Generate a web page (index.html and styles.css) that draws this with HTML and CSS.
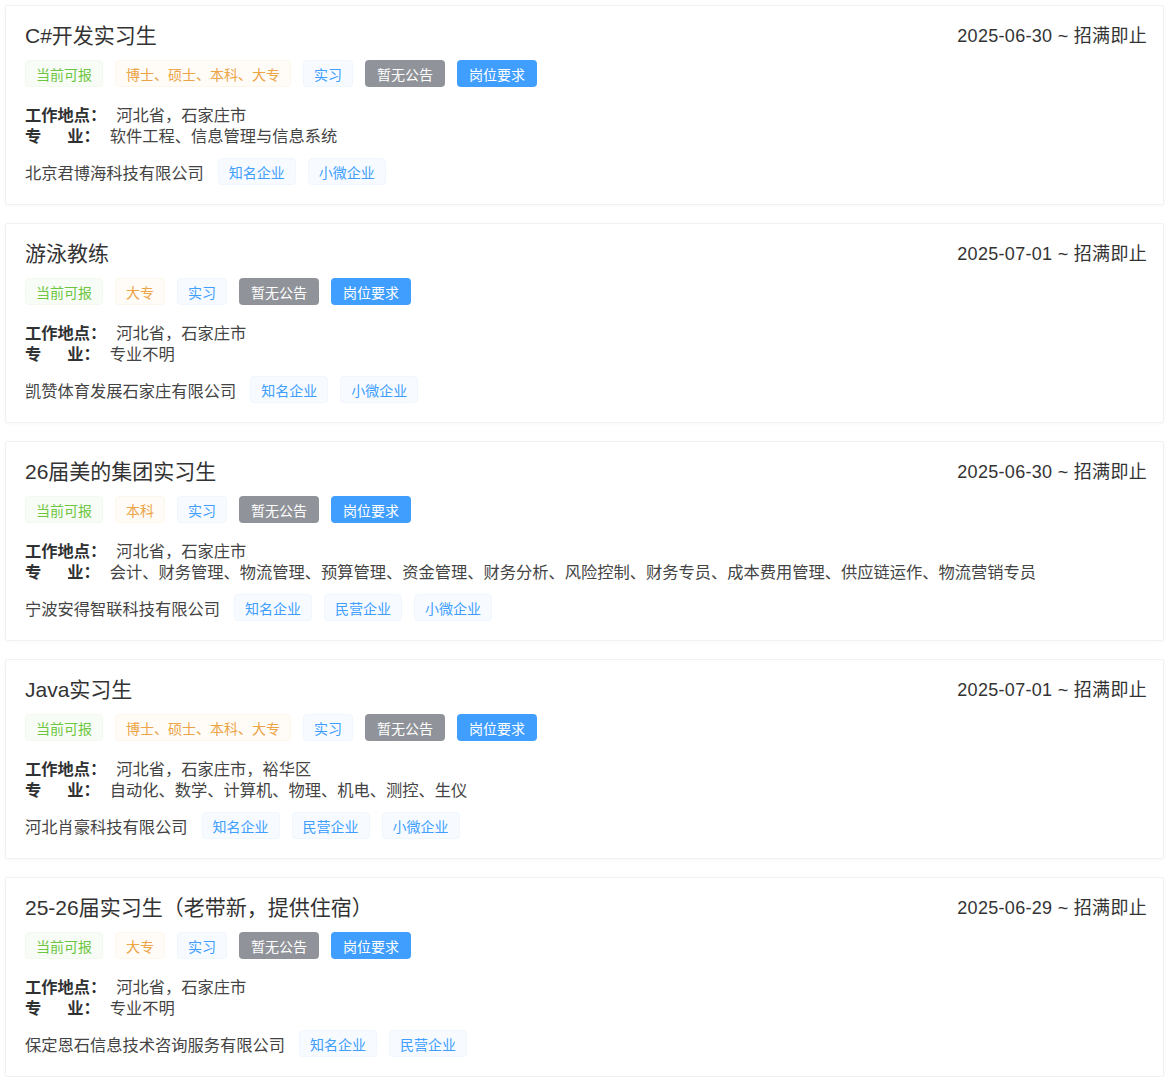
FILE: index.html
```html
<!DOCTYPE html>
<html lang="zh-CN">
<head>
  <meta charset="UTF-8">
  <meta name="viewport" content="width=device-width, initial-scale=1.0">
  <title>实习岗位列表</title>
  <link rel="stylesheet" href="styles.css">
</head>
<body>
  <div class="job-list">

    <div class="job-card">
      <div class="job-head">
        <span class="job-title">C#开发实习生</span>
        <span class="job-date">2025-06-30 ~ 招满即止</span>
      </div>
      <div class="tag-row">
        <span class="tag tag-success">当前可报</span>
        <span class="tag tag-warning">博士、硕士、本科、大专</span>
        <span class="tag tag-primary">实习</span>
        <span class="btn btn-info">暂无公告</span>
        <span class="btn btn-primary">岗位要求</span>
      </div>
      <div class="job-info">
        <p><b class="label">工作地点：</b>河北省，石家庄市</p>
        <p><b class="label">专<i class="sp"></i>业：</b>软件工程、信息管理与信息系统</p>
      </div>
      <div class="company-row">
        <span class="company">北京君博海科技有限公司</span>
        <span class="tag tag-primary">知名企业</span>
        <span class="tag tag-primary">小微企业</span>
      </div>
    </div>

    <div class="job-card">
      <div class="job-head">
        <span class="job-title">游泳教练</span>
        <span class="job-date">2025-07-01 ~ 招满即止</span>
      </div>
      <div class="tag-row">
        <span class="tag tag-success">当前可报</span>
        <span class="tag tag-warning">大专</span>
        <span class="tag tag-primary">实习</span>
        <span class="btn btn-info">暂无公告</span>
        <span class="btn btn-primary">岗位要求</span>
      </div>
      <div class="job-info">
        <p><b class="label">工作地点：</b>河北省，石家庄市</p>
        <p><b class="label">专<i class="sp"></i>业：</b>专业不明</p>
      </div>
      <div class="company-row">
        <span class="company">凯赞体育发展石家庄有限公司</span>
        <span class="tag tag-primary">知名企业</span>
        <span class="tag tag-primary">小微企业</span>
      </div>
    </div>

    <div class="job-card">
      <div class="job-head">
        <span class="job-title">26届美的集团实习生</span>
        <span class="job-date">2025-06-30 ~ 招满即止</span>
      </div>
      <div class="tag-row">
        <span class="tag tag-success">当前可报</span>
        <span class="tag tag-warning">本科</span>
        <span class="tag tag-primary">实习</span>
        <span class="btn btn-info">暂无公告</span>
        <span class="btn btn-primary">岗位要求</span>
      </div>
      <div class="job-info">
        <p><b class="label">工作地点：</b>河北省，石家庄市</p>
        <p><b class="label">专<i class="sp"></i>业：</b>会计、财务管理、物流管理、预算管理、资金管理、财务分析、风险控制、财务专员、成本费用管理、供应链运作、物流营销专员</p>
      </div>
      <div class="company-row">
        <span class="company">宁波安得智联科技有限公司</span>
        <span class="tag tag-primary">知名企业</span>
        <span class="tag tag-primary">民营企业</span>
        <span class="tag tag-primary">小微企业</span>
      </div>
    </div>

    <div class="job-card">
      <div class="job-head">
        <span class="job-title">Java实习生</span>
        <span class="job-date">2025-07-01 ~ 招满即止</span>
      </div>
      <div class="tag-row">
        <span class="tag tag-success">当前可报</span>
        <span class="tag tag-warning">博士、硕士、本科、大专</span>
        <span class="tag tag-primary">实习</span>
        <span class="btn btn-info">暂无公告</span>
        <span class="btn btn-primary">岗位要求</span>
      </div>
      <div class="job-info">
        <p><b class="label">工作地点：</b>河北省，石家庄市，裕华区</p>
        <p><b class="label">专<i class="sp"></i>业：</b>自动化、数学、计算机、物理、机电、测控、生仪</p>
      </div>
      <div class="company-row">
        <span class="company">河北肖豪科技有限公司</span>
        <span class="tag tag-primary">知名企业</span>
        <span class="tag tag-primary">民营企业</span>
        <span class="tag tag-primary">小微企业</span>
      </div>
    </div>

    <div class="job-card">
      <div class="job-head">
        <span class="job-title">25-26届实习生（老带新，提供住宿）</span>
        <span class="job-date">2025-06-29 ~ 招满即止</span>
      </div>
      <div class="tag-row">
        <span class="tag tag-success">当前可报</span>
        <span class="tag tag-warning">大专</span>
        <span class="tag tag-primary">实习</span>
        <span class="btn btn-info">暂无公告</span>
        <span class="btn btn-primary">岗位要求</span>
      </div>
      <div class="job-info">
        <p><b class="label">工作地点：</b>河北省，石家庄市</p>
        <p><b class="label">专<i class="sp"></i>业：</b>专业不明</p>
      </div>
      <div class="company-row">
        <span class="company">保定恩石信息技术咨询服务有限公司</span>
        <span class="tag tag-primary">知名企业</span>
        <span class="tag tag-primary">民营企业</span>
      </div>
    </div>

  </div>
</body>
</html>
```

FILE: styles.css
```css
:root {
  --text: #303133;
  --text-regular: #444;
  --primary: #409eff;
  --success: #67c23a;
  --warning: #e6a23c;
  --info: #909399;
  --border: #eff1f4;
}

body {
  margin: 0;
  padding: 5px 9px 0 5px;
  background: #fff;
  color: var(--text);
  font-family: "Liberation Sans", "Noto Sans CJK SC", sans-serif;
}

.job-list {
  display: flex;
  flex-direction: column;
  gap: 18px;
}

.job-card {
  border: 1px solid var(--border);
  border-radius: 2px;
  padding: 18px 16px 19px 19px;
  box-shadow: 0 1px 4px rgba(0, 0, 0, 0.03);
}

.job-head {
  display: flex;
  justify-content: space-between;
  align-items: center;
  height: 24px;
}

.job-title {
  font-size: 21px;
  line-height: 24px;
  color: #333;
}

.job-date {
  font-size: 18px;
  line-height: 24px;
  letter-spacing: 0.3px;
  color: #333;
}

.tag-row,
.company-row {
  display: flex;
  align-items: center;
  gap: 12px;
}

.tag-row {
  margin-top: 12px;
}

.tag,
.btn {
  display: inline-flex;
  align-items: center;
  height: 27px;
  padding: 0 10px;
  font-size: 14px;
  border-radius: 4px;
  box-sizing: border-box;
  white-space: nowrap;
}

.tag-success {
  color: #6cc640;
  background: #f8fcf6;
  border: 1px solid #f3f9ef;
}

.tag-warning {
  color: #eba446;
  background: #fffbf6;
  border: 1px solid #fdf6ec;
}

.tag-primary {
  color: var(--primary);
  background: #f7fbff;
  border: 1px solid #eff6fe;
}

.btn {
  padding: 0 12px;
  color: #fff;
}

.btn-info {
  background: var(--info);
}

.btn-primary {
  background: var(--primary);
}

.job-info {
  margin-top: 18px;
  font-size: 16.25px;
  line-height: 21px;
  color: var(--text-regular);
}

.job-info p {
  margin: 0;
}

.label {
  margin-right: 10px;
  color: var(--text);
}

.label .sp {
  display: inline-block;
  width: 26px;
}

.company-row {
  margin-top: 11px;
}

.company {
  font-size: 16.25px;
  color: var(--text-regular);
  margin-right: 2px;
}
```
